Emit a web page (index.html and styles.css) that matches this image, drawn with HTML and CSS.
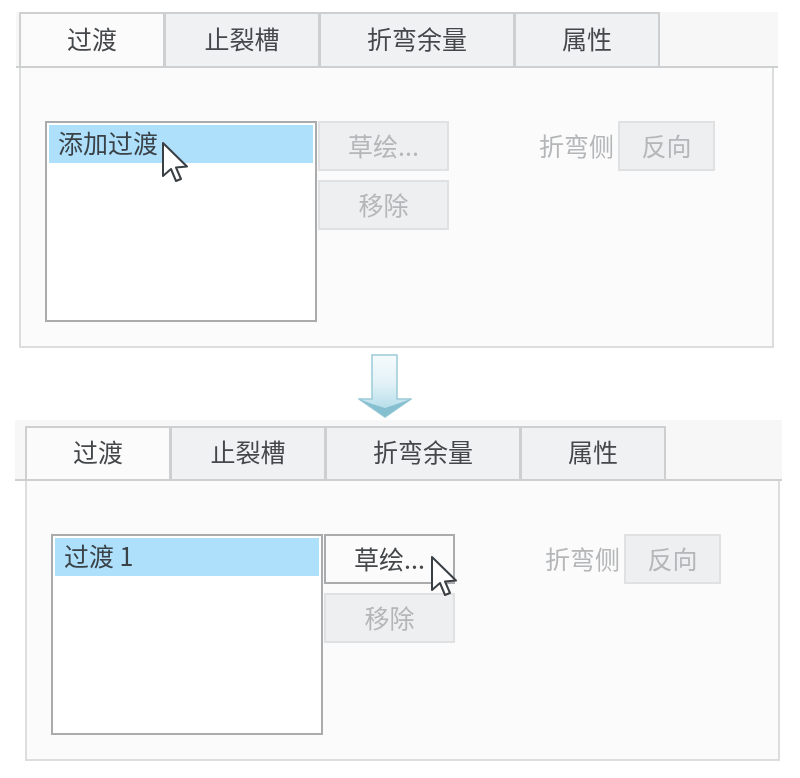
FILE: index.html
```html
<!DOCTYPE html>
<html lang="zh-CN">
<head>
  <meta charset="UTF-8" />
  <title>过渡</title>
  <link rel="stylesheet" href="styles.css">
</head>
<body>
  <div class="page">
    <!-- Before -->
    <section class="panel panel-before">
      <div class="tab-strip">
        <div class="tab tab-active">过渡</div>
        <div class="tab tab-relief">止裂槽</div>
        <div class="tab tab-allowance">折弯余量</div>
        <div class="tab">属性</div>
      </div>
      <div class="tab-body">
        <div class="list">
          <div class="list-row">添加过渡</div>
        </div>
        <div class="btn-col">
          <button class="btn" disabled>草绘...</button>
          <button class="btn" disabled>移除</button>
        </div>
        <div class="side-label">折弯侧</div>
        <button class="btn btn-flip" disabled>反向</button>
      </div>
      <svg class="cursor cursor-before" width="26" height="40" viewBox="-1 -1 26 40">
        <path d="M0 0V33L8 26L13 38L18 36L13 24.500L24 23.500Z" fill="#fff" stroke="#3a3f44" stroke-width="2" stroke-linejoin="round" />
      </svg>
    </section>

    <!-- Arrow -->
    <div class="arrow-row">
      <svg width="54" height="64" viewBox="0 0 54 64">
        <defs>
          <linearGradient id="shaft" x1="0" y1="0" x2="0" y2="1">
            <stop offset="0" stop-color="#f6fbfd" />
            <stop offset="0.45" stop-color="#e3f2f7" />
            <stop offset="1" stop-color="#a8d8e6" />
          </linearGradient>
        </defs>
        <path d="M14 1H39V45H53L27 63L1 45H14Z" fill="url(#shaft)" stroke="#9ccbd8" stroke-width="1.500" />
        <path d="M1 45L27 63L53 45L39 50L27 54L14 50Z" fill="#86bfd0" />
      </svg>
    </div>

    <!-- After -->
    <section class="panel panel-after">
      <div class="tab-strip">
        <div class="tab tab-active">过渡</div>
        <div class="tab tab-relief">止裂槽</div>
        <div class="tab tab-allowance">折弯余量</div>
        <div class="tab">属性</div>
      </div>
      <div class="tab-body">
        <div class="list">
          <div class="list-row">过渡 1</div>
        </div>
        <div class="btn-col">
          <button class="btn btn-on">草绘...</button>
          <button class="btn" disabled>移除</button>
        </div>
        <div class="side-label">折弯侧</div>
        <button class="btn btn-flip" disabled>反向</button>
      </div>
      <svg class="cursor cursor-after" width="26" height="40" viewBox="-1 -1 26 40">
        <path d="M0 0V33L8 26L13 38L18 36L13 24.500L24 23.500Z" fill="#fff" stroke="#3a3f44" stroke-width="2" stroke-linejoin="round" />
      </svg>
    </section>
  </div>
</body>
</html>
```

FILE: styles.css
```css
:root {
  --line: #cdcfd0;
  --tab-bg: #f0f1f2;
  --panel-bg: #fbfbfb;
  --text: #45484b;
  --muted: #b4b6b8;
  --select: #aee0fb;
}

html, body {
  margin: 0;
  padding: 0;
  background: #fff;
}

body {
  font-family: "Noto Sans CJK SC", "Liberation Sans", sans-serif;
  font-size: 25px;
  color: var(--text);
}

.page {
  width: 800px;
  height: 778px;
  overflow: hidden;
  padding-top: 12px;
  box-sizing: border-box;
  filter: blur(0.5px);
}

.panel {
  position: relative;
}

.panel-before {
  margin-left: 16px;
  width: 762px;
}

.panel-after {
  margin-left: 15px;
  width: 767px;
}

.tab-strip {
  display: flex;
  background: #f7f7f7;
  border-bottom: 2px solid var(--line);
  height: 53px;
}

.panel-before .tab-strip {
  height: 54px;
  padding: 0 0 0 3px;
}

.panel-after .tab-strip {
  padding: 6px 0 0 10px;
}

.tab {
  width: 145px;
  box-sizing: border-box;
  display: flex;
  align-items: center;
  justify-content: center;
  padding-bottom: 4px;
  background: var(--tab-bg);
  border: 2px solid var(--line);
  border-left-width: 1px;
  border-bottom: 0;
  line-height: 1;
}

.tab-active {
  width: 146px;
  background: #fbfbfb;
  border-left-width: 2px;
}

.tab-relief {
  width: 155px;
}

.tab-allowance {
  width: 195px;
}

.tab-body {
  width: 755px;
  height: 281px;
  box-sizing: border-box;
  display: flex;
  align-items: flex-start;
  padding: 53px 0 0 24px;
  background: var(--panel-bg);
  border: 2px solid #dcdddd;
  border-top: 0;
}

.panel-before .tab-body {
  margin-left: 3px;
  height: 280px;
}

.panel-after .tab-body {
  margin-left: 10px;
  height: 280px;
}

.list {
  width: 272px;
  height: 201px;
  box-sizing: border-box;
  padding: 2px;
  background: #fff;
  border: 2px solid #a9abad;
}

.list-row {
  height: 38px;
  padding-left: 9px;
  background: var(--select);
  line-height: 35px;
  color: #3a4248;
}

.btn-col {
  display: flex;
  flex-direction: column;
  gap: 9px;
  margin-left: 1px;
}

.btn {
  width: 131px;
  height: 50px;
  padding: 0 0 1px;
  font: inherit;
  line-height: 1;
  color: var(--muted);
  background: #eeeff0;
  border: 2px solid #e0e1e2;
}

.btn-on {
  color: var(--text);
  background: #fbfbfb;
  border-color: #a9abad;
}

.btn-flip {
  width: 97px;
  margin-left: 7px;
}

.side-label {
  width: 72px;
  margin-left: 90px;
  height: 50px;
  line-height: 48px;
  color: var(--muted);
  white-space: nowrap;
}

.arrow-row {
  height: 66px;
  padding-top: 6px;
  display: flex;
  justify-content: center;
  margin-left: -31px;
}

.cursor {
  position: absolute;
  overflow: visible;
}

.cursor-before {
  left: 146px;
  top: 130px;
}

.cursor-after {
  left: 416px;
  top: 136px;
}
```
